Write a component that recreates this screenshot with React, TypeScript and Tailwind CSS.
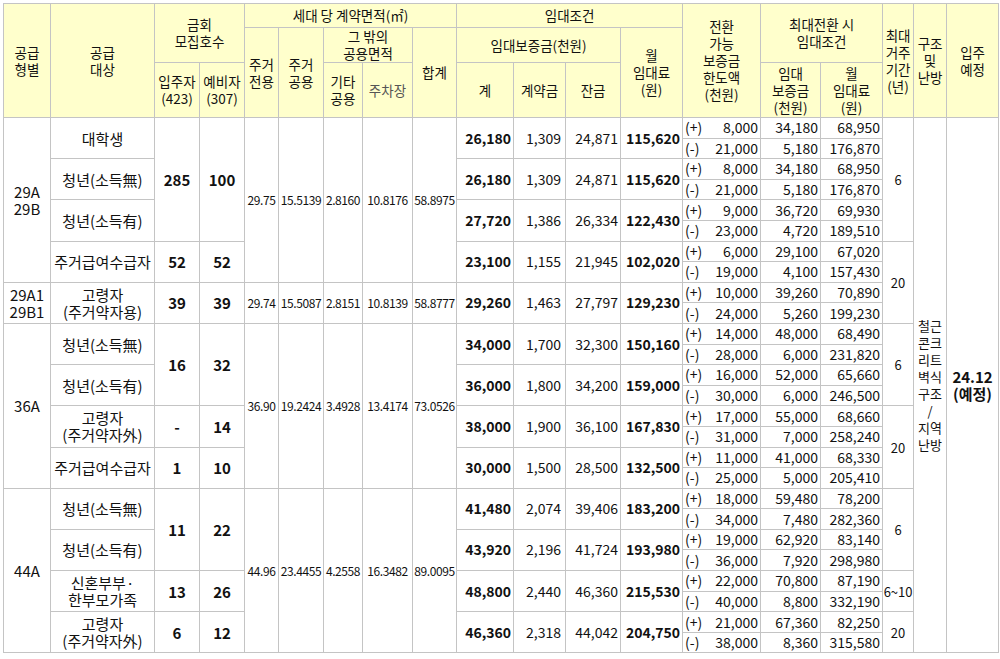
import React from "react";

type G = { who: string[]; r: string[]; p: string[]; m: string[] };
const groups: G[] = [
  { who: ["대학생"], r: ["26,180", "1,309", "24,871", "115,620"], p: ["8,000", "34,180", "68,950"], m: ["21,000", "5,180", "176,870"] },
  { who: ["청년(소득無)"], r: ["26,180", "1,309", "24,871", "115,620"], p: ["8,000", "34,180", "68,950"], m: ["21,000", "5,180", "176,870"] },
  { who: ["청년(소득有)"], r: ["27,720", "1,386", "26,334", "122,430"], p: ["9,000", "36,720", "69,930"], m: ["23,000", "4,720", "189,510"] },
  { who: ["주거급여수급자"], r: ["23,100", "1,155", "21,945", "102,020"], p: ["6,000", "29,100", "67,020"], m: ["19,000", "4,100", "157,430"] },
  { who: ["고령자", "(주거약자용)"], r: ["29,260", "1,463", "27,797", "129,230"], p: ["10,000", "39,260", "70,890"], m: ["24,000", "5,260", "199,230"] },
  { who: ["청년(소득無)"], r: ["34,000", "1,700", "32,300", "150,160"], p: ["14,000", "48,000", "68,490"], m: ["28,000", "6,000", "231,820"] },
  { who: ["청년(소득有)"], r: ["36,000", "1,800", "34,200", "159,000"], p: ["16,000", "52,000", "65,660"], m: ["30,000", "6,000", "246,500"] },
  { who: ["고령자", "(주거약자外)"], r: ["38,000", "1,900", "36,100", "167,830"], p: ["17,000", "55,000", "68,660"], m: ["31,000", "7,000", "258,240"] },
  { who: ["주거급여수급자"], r: ["30,000", "1,500", "28,500", "132,500"], p: ["11,000", "41,000", "68,330"], m: ["25,000", "5,000", "205,410"] },
  { who: ["청년(소득無)"], r: ["41,480", "2,074", "39,406", "183,200"], p: ["18,000", "59,480", "78,200"], m: ["34,000", "7,480", "282,360"] },
  { who: ["청년(소득有)"], r: ["43,920", "2,196", "41,724", "193,980"], p: ["19,000", "62,920", "83,140"], m: ["36,000", "7,920", "298,980"] },
  { who: ["신혼부부·", "한부모가족"], r: ["48,800", "2,440", "46,360", "215,530"], p: ["22,000", "70,800", "87,190"], m: ["40,000", "8,800", "332,190"] },
  { who: ["고령자", "(주거약자外)"], r: ["46,360", "2,318", "44,042", "204,750"], p: ["21,000", "67,360", "82,250"], m: ["38,000", "8,360", "315,580"] },
];

const types: Record<number, [string[], number]> = { 0: [["29A", "29B"], 8], 4: [["29A1", "29B1"], 2], 5: [["36A"], 8], 9: [["44A"], 8] };
const counts: Record<number, [string, string, number]> = {
  0: ["285", "100", 6], 3: ["52", "52", 2], 4: ["39", "39", 2], 5: ["16", "32", 4], 7: ["-", "14", 2], 8: ["1", "10", 2],
  9: ["11", "22", 4], 11: ["13", "26", 2], 12: ["6", "12", 2],
};
const areas: Record<number, [string[], number]> = {
  0: [["29.75", "15.5139", "2.8160", "10.8176", "58.8975"], 8],
  4: [["29.74", "15.5087", "2.8151", "10.8139", "58.8777"], 2],
  5: [["36.90", "19.2424", "3.4928", "13.4174", "73.0526"], 8],
  9: [["44.96", "23.4455", "4.2558", "16.3482", "89.0095"], 8],
};
const stay: Record<number, [string, number]> = { 0: ["6", 6], 3: ["20", 4], 5: ["6", 4], 7: ["20", 4], 9: ["6", 4], 11: ["6~10", 2], 12: ["20", 2] };

const widths = [47, 104, 45, 45, 34, 45, 39, 50, 44, 57, 52, 55, 62, 78, 60, 62, 31, 33, 52];
const b = "border border-[#c4c4c4]";
const th = `${b} bg-[#ffffcc] font-normal text-center align-middle leading-[17px] p-0`;
const td = `${b} text-center align-middle p-0 leading-[17px]`;

export default function App() {
  const rows: React.ReactNode[] = [];
  groups.forEach((g, i) => {
    const t = types[i], c = counts[i], a = areas[i], s = stay[i];
    rows.push(
      <tr key={i + "a"} className="h-[20.6px]">
        {t && <td rowSpan={t[1]} className={`${td} text-[15px]`}>{t[0].map((x) => <div key={x}>{x}</div>)}</td>}
        <td rowSpan={2} className={`${td} text-[15px]`}>{g.who.map((x) => <div key={x}>{x}</div>)}</td>
        {c && <td rowSpan={c[2]} className={`${td} font-bold text-[15px]`}>{c[0]}</td>}
        {c && <td rowSpan={c[2]} className={`${td} font-bold text-[15px]`}>{c[1]}</td>}
        {a && a[0].map((x, k) => <td key={k} rowSpan={a[1]} className={`${td} text-[12px] tracking-[-0.4px]`}>{x}</td>)}
        <td rowSpan={2} className={`${td} font-bold text-right pr-[2px]`}>{g.r[0]}</td>
        <td rowSpan={2} className={`${td} text-right pr-[4px]`}>{g.r[1]}</td>
        <td rowSpan={2} className={`${td} text-right pr-[2px]`}>{g.r[2]}</td>
        <td rowSpan={2} className={`${td} font-bold text-right pr-[2px]`}>{g.r[3]}</td>
        <td className={`${td} px-[2px]`}><div className="flex justify-between"><span>(+)</span><span>{g.p[0]}</span></div></td>
        <td className={`${td} text-right pr-[2px]`}>{g.p[1]}</td>
        <td className={`${td} text-right pr-[2px]`}>{g.p[2]}</td>
        {s && <td rowSpan={s[1]} className={`${td} text-[13px]`}>{s[0]}</td>}
        {i === 0 && (
          <td rowSpan={26} className={`${td} text-[13px] leading-[16px]`}>
            {["철근", "콘크", "리트", "벽식", "구조", "/", "지역", "난방"].map((x, k) => <div key={k}>{x}</div>)}
          </td>
        )}
        {i === 0 && (
          <td rowSpan={26} className={`${td} font-bold text-[15px]`}>
            <div>24.12</div><div>(예정)</div>
          </td>
        )}
      </tr>
    );
    rows.push(
      <tr key={i + "b"} className="h-[20.6px]">
        <td className={`${td} px-[2px]`}><div className="flex justify-between"><span>(-)</span><span>{g.m[0]}</span></div></td>
        <td className={`${td} text-right pr-[2px]`}>{g.m[1]}</td>
        <td className={`${td} text-right pr-[2px]`}>{g.m[2]}</td>
      </tr>
    );
  });

  return (
    <div className="w-[1000px] h-[659px] bg-white pt-[3px] pl-[3px]" style={{ fontFamily: '"Noto Sans CJK KR", "Noto Sans", sans-serif' }}>
      <table className="border-collapse table-fixed text-[14px] text-[#111] border border-[#a8a8a8]" style={{ width: 995 }}>
        <colgroup>
          {widths.map((w, k) => <col key={k} style={{ width: w }} />)}
        </colgroup>
        <thead className="text-[13.5px]">
          <tr className="h-[24px]">
            <th rowSpan={3} className={th}>공급<br />형별</th>
            <th rowSpan={3} className={th}>공급<br />대상</th>
            <th colSpan={2} rowSpan={2} className={th}>금회<br />모집호수</th>
            <th colSpan={5} className={th}>세대 당 계약면적(㎡)</th>
            <th colSpan={4} className={th}>임대조건</th>
            <th rowSpan={3} className={th}>전환<br />가능<br />보증금<br />한도액<br />(천원)</th>
            <th colSpan={2} rowSpan={2} className={th}>최대전환 시<br />임대조건</th>
            <th rowSpan={3} className={th}>최대<br />거주<br />기간<br />(년)</th>
            <th rowSpan={3} className={th}>구조<br />및<br />난방</th>
            <th rowSpan={3} className={th}>입주<br />예정</th>
          </tr>
          <tr className="h-[35px]">
            <th rowSpan={2} className={th}>주거<br />전용</th>
            <th rowSpan={2} className={th}>주거<br />공용</th>
            <th colSpan={2} className={th}>그 밖의<br />공용면적</th>
            <th rowSpan={2} className={th}>합계</th>
            <th colSpan={3} className={th}>임대보증금(천원)</th>
            <th rowSpan={2} className={th}>월<br />임대료<br />(원)</th>
          </tr>
          <tr className="h-[55px]">
            <th className={th}>입주자<br />(423)</th>
            <th className={th}>예비자<br />(307)</th>
            <th className={th}>기타<br />공용</th>
            <th className={`${th} text-[#555]`}>주차장</th>
            <th className={th}>계</th>
            <th className={th}>계약금</th>
            <th className={th}>잔금</th>
            <th className={th}>임대<br />보증금<br />(천원)</th>
            <th className={th}>월<br />임대료<br />(원)</th>
          </tr>
        </thead>
        <tbody>{rows}</tbody>
      </table>
    </div>
  );
}
